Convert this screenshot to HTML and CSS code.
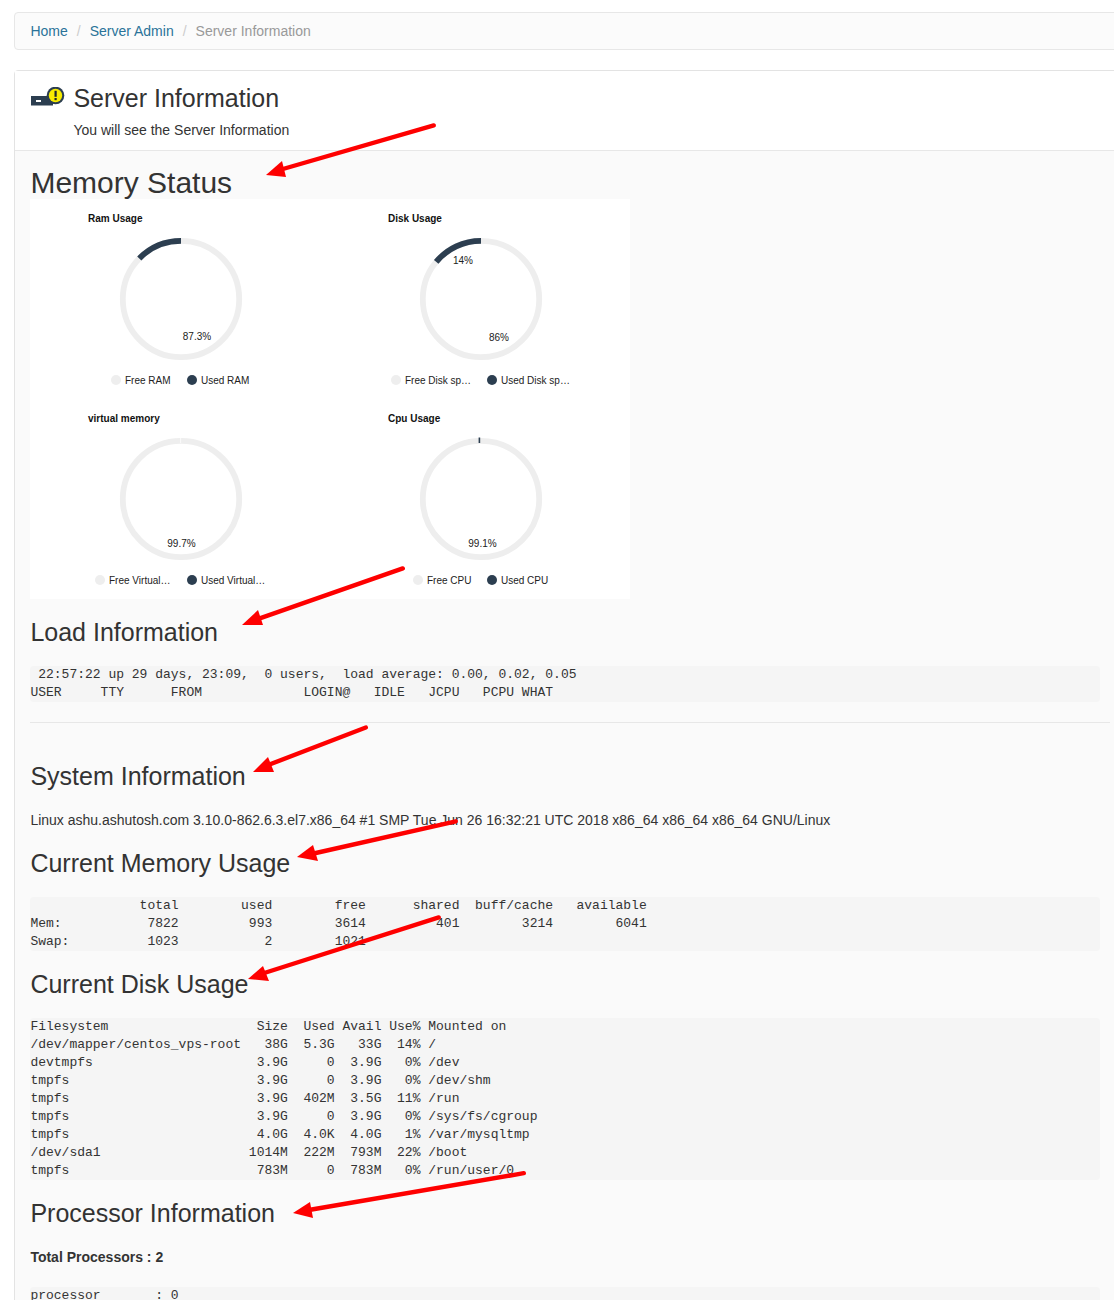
FILE: index.html
```html
<!DOCTYPE html>
<html lang="en">
<head>
<meta charset="utf-8">
<title>Server Information</title>
<link rel="stylesheet" href="styles.css">
</head>
<body>
<div class="page">
  <ol class="breadcrumb">
    <li><a href="#">Home</a></li>
    <li class="sep">/</li>
    <li><a href="#">Server Admin</a></li>
    <li class="sep">/</li>
    <li class="current">Server Information</li>
  </ol>
  <section class="panel">
    <header class="panel-head">
      <svg class="head-icon" width="34" height="20" viewBox="0 0 34 20">
        <rect x="0" y="9" width="22" height="9.5" fill="#2c3e50"/>
        <rect x="5" y="13" width="5" height="2" fill="#fff"/>
        <circle cx="24.5" cy="8.5" r="8.8" fill="#2c3e50"/>
        <circle cx="24.5" cy="8.5" r="6.7" fill="#f7ec00"/>
        <rect x="23.5" y="3.8" width="2.2" height="6" fill="#1b2530"/>
        <rect x="23.5" y="11" width="2.2" height="2.2" fill="#1b2530"/>
      </svg>
      <div>
        <h1 class="head-title">Server Information</h1>
        <p class="head-sub">You will see the Server Information</p>
      </div>
    </header>
    <div class="panel-body">
      <h2 class="title-main">Memory Status</h2>
      <div class="charts">
        <svg class="chart" viewBox="0 0 300 200" width="300" height="200">
          <text class="c-title" x="58" y="23">Ram Usage</text>
          <circle class="ring" cx="151" cy="100" r="58.2"/>
          <path class="arc" d="M151 41.8A58.2 58.2 0 0 0 109.3 59.4"/>
          <text class="c-label mid" x="167" y="141">87.3%</text>
          <circle class="dot-free" cx="86" cy="181" r="5"/>
          <text class="c-label" x="95" y="185">Free RAM</text>
          <circle class="dot-used" cx="162" cy="181" r="5"/>
          <text class="c-label" x="171" y="185">Used RAM</text>
        </svg>
        <svg class="chart" viewBox="0 0 300 200" width="300" height="200">
          <text class="c-title" x="58" y="23">Disk Usage</text>
          <circle class="ring" cx="151" cy="100" r="58.2"/>
          <path class="arc" d="M151 41.8A58.2 58.2 0 0 0 106.2 62.9"/>
          <text class="c-label mid" x="133" y="65">14%</text>
          <text class="c-label mid" x="169" y="142">86%</text>
          <circle class="dot-free" cx="66" cy="181" r="5"/>
          <text class="c-label" x="75" y="185">Free Disk sp…</text>
          <circle class="dot-used" cx="162" cy="181" r="5"/>
          <text class="c-label" x="171" y="185">Used Disk sp…</text>
        </svg>
        <svg class="chart" viewBox="0 0 300 200" width="300" height="200">
          <text class="c-title" x="58" y="23">virtual memory</text>
          <circle class="ring" cx="151" cy="100" r="58.2"/>
          <path class="tick-white" d="M150.6 39V44"/>
          <text class="c-label mid" x="151.5" y="148">99.7%</text>
          <circle class="dot-free" cx="70" cy="181" r="5"/>
          <text class="c-label" x="79" y="185">Free Virtual…</text>
          <circle class="dot-used" cx="162" cy="181" r="5"/>
          <text class="c-label" x="171" y="185">Used Virtual…</text>
        </svg>
        <svg class="chart" viewBox="0 0 300 200" width="300" height="200">
          <text class="c-title" x="58" y="23">Cpu Usage</text>
          <circle class="ring" cx="151" cy="100" r="58.2"/>
          <path class="tick-dark" d="M149.4 38.5V44"/>
          <text class="c-label mid" x="152.5" y="148">99.1%</text>
          <circle class="dot-free" cx="88" cy="181" r="5"/>
          <text class="c-label" x="97" y="185">Free CPU</text>
          <circle class="dot-used" cx="162" cy="181" r="5"/>
          <text class="c-label" x="171" y="185">Used CPU</text>
        </svg>
      </div>
      <h2 class="title">Load Information</h2>
      <pre class="output"> 22:57:22 up 29 days, 23:09,  0 users,  load average: 0.00, 0.02, 0.05
USER     TTY      FROM             LOGIN@   IDLE   JCPU   PCPU WHAT</pre>
      <hr class="rule">
      <h2 class="title">System Information</h2>
      <p class="line">Linux ashu.ashutosh.com 3.10.0-862.6.3.el7.x86_64 #1 SMP Tue Jun 26 16:32:21 UTC 2018 x86_64 x86_64 x86_64 GNU/Linux</p>
      <h2 class="title">Current Memory Usage</h2>
      <pre class="output">              total        used        free      shared  buff/cache   available
Mem:           7822         993        3614         401        3214        6041
Swap:          1023           2        1021</pre>
      <h2 class="title">Current Disk Usage</h2>
      <pre class="output">Filesystem                   Size  Used Avail Use% Mounted on
/dev/mapper/centos_vps-root   38G  5.3G   33G  14% /
devtmpfs                     3.9G     0  3.9G   0% /dev
tmpfs                        3.9G     0  3.9G   0% /dev/shm
tmpfs                        3.9G  402M  3.5G  11% /run
tmpfs                        3.9G     0  3.9G   0% /sys/fs/cgroup
tmpfs                        4.0G  4.0K  4.0G   1% /var/mysqltmp
/dev/sda1                   1014M  222M  793M  22% /boot
tmpfs                        783M     0  783M   0% /run/user/0</pre>
      <h2 class="title">Processor Information</h2>
      <p class="line total">Total Processors : 2</p>
      <pre class="output">processor       : 0</pre>
    </div>
  </section>
  <svg class="arrows" width="1114" height="1300" viewBox="0 0 1114 1300">
    <g class="arrow">
      <line x1="433.8" y1="125.4" x2="276" y2="171"/><polygon points="266,175 282,161 286,177"/>
      <line x1="402.8" y1="568.4" x2="252" y2="621"/><polygon points="242,625 258,610 263,625"/>
      <line x1="365.8" y1="727.5" x2="263" y2="767"/><polygon points="253,772 268,757 274,772"/>
      <line x1="455.8" y1="821.3" x2="307" y2="855"/><polygon points="297,857 313,845 318,861"/>
      <line x1="438.8" y1="917.4" x2="258" y2="975"/><polygon points="248,979 263,966 269,981"/>
      <line x1="523.8" y1="1173.2" x2="303" y2="1211"/><polygon points="293,1213 310,1202 313,1218"/>
    </g>
  </svg>
</div>
</body>
</html>
```
FILE: styles.css
```css
* { box-sizing: border-box; }
html, body { margin: 0; padding: 0; background: #fff; overflow: hidden; height: 1300px; }
body {
  font-family: "Liberation Sans", Arial, sans-serif;
  font-size: 14px;
  line-height: 20px;
  color: #333;
}
.page {
  position: relative;
  width: 1126px;
  height: 1300px;
  padding: 12px 0 0 14.4px;
  overflow: hidden;
}
.breadcrumb {
  display: flex;
  gap: 9px;
  list-style: none;
  margin: 0 0 20px;
  padding: 8px 15px;
  height: 38px;
  background: #fbfbfb;
  border: 1px solid #e7e7e7;
  border-radius: 4px;
}
.breadcrumb a { color: #2a7399; text-decoration: none; }
.sep { color: #ccc; }
.current { color: #999; }
.panel {
  border: 1px solid #e3e3e3;
  border-radius: 4px;
  background: #fafafa;
}
.panel-head {
  display: flex;
  background: #fff;
  padding: 13px 15px 10px;
  height: 80px;
  border-bottom: 1px solid #e7e7e7;
}
.head-icon { flex: none; margin: 3px 8px 0 1px; width: 34px; height: 20px; }
.head-title {
  margin: 0 0 8px;
  font-size: 25px;
  line-height: 28px;
  font-weight: 400;
}
.head-sub { margin: 0; }
.panel-body { padding: 15px 15px 0; }
.title-main {
  margin: 0;
  font-size: 30px;
  line-height: 33px;
  font-weight: 400;
}
.title {
  margin: 19px 0;
  font-size: 25px;
  line-height: 29px;
  font-weight: 400;
}
.charts {
  display: grid;
  grid-template-columns: 300px 300px;
  width: 600px;
  background: #fff;
}
.chart { display: block; }
.c-title { font-size: 10px; font-weight: 700; fill: #111; }
.c-label { font-size: 10px; fill: #222; }
.mid { text-anchor: middle; }
.ring { fill: none; stroke: #eee; stroke-width: 5.8; }
.arc { fill: none; stroke: #2c3e50; stroke-width: 5.8; }
.tick-white { stroke: #fafafa; stroke-width: 1; }
.tick-dark { stroke: #2c3e50; stroke-width: 1.6; }
.dot-free { fill: #eee; }
.dot-used { fill: #2c3e50; }
.output {
  margin: 19px 10px 19px 0;
  padding: 0;
  font-family: "Liberation Mono", "Courier New", monospace;
  font-size: 13px;
  line-height: 18px;
  color: #333;
  background: #f5f5f5;
  border-radius: 4px;
  white-space: pre;
}
.rule { margin: 20px 0 39px; border: 0; border-top: 1px solid #e7e7e7; }
.line { margin: 0; }
.total { font-weight: 700; margin: 19px 0 20px; }
.arrows { position: absolute; left: 0; top: 0; pointer-events: none; }
.arrow line { stroke: #fe0000; stroke-width: 4.4; stroke-linecap: round; }
.arrow polygon { fill: #fe0000; }
```
